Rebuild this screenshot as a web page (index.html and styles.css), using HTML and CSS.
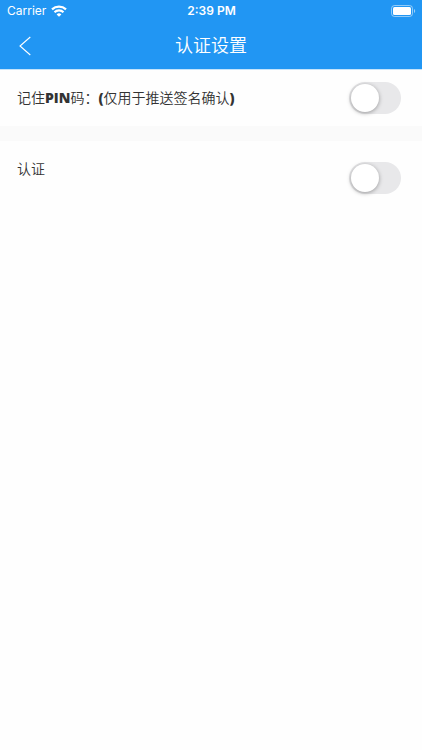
FILE: index.html
```html
<!DOCTYPE html>
<html lang="zh-CN">
<head>
<meta charset="utf-8">
<meta name="viewport" content="width=device-width, initial-scale=1">
<title>认证设置</title>
<link rel="stylesheet" href="styles.css">
</head>
<body>
<header class="header">
  <div class="status">
    <div class="status-left">
      <span>Carrier</span>
      <svg class="wifi" width="16" height="12" viewBox="0 0 16 12" fill="none" stroke="currentColor" stroke-width="2.200" aria-hidden="true">
        <path d="M1 4.4a10.2 10.2 0 0 1 14 0"/>
        <path d="M3.5 7.200a6.5 6.5 0 0 1 9 0"/>
        <path d="M8 11.8 5.6 9.4a3.5 3.5 0 0 1 4.8 0z" fill="currentColor" stroke="none"/>
      </svg>
    </div>
    <time class="clock">2:39 PM</time>
    <svg class="battery" width="25" height="12" viewBox="0 0 25 12" aria-hidden="true">
      <rect x=".5" y=".5" width="21" height="11" rx="3" fill="none" stroke="#fff" stroke-opacity=".5"/>
      <rect x="2" y="2" width="18" height="8" rx="1.5" fill="#fff"/>
      <path d="M23 4v4c1.6-.7 1.6-3.300 0-4z" fill="#fff" fill-opacity=".55"/>
    </svg>
  </div>
  <div class="nav">
    <button class="back" type="button" aria-label="返回">
      <svg width="12" height="20" viewBox="0 0 12 20" fill="none" stroke="currentColor" stroke-width="1.100" aria-hidden="true"><path d="M11.300 1 1 10l10.300 9"/></svg>
    </button>
    <h1 class="title">认证设置</h1>
  </div>
</header>
<main class="settings">
  <div class="row">
    <label class="label" for="pin">记住<b>PIN</b>码：<b>(</b>仅用于推送签名确认<b>)</b></label>
    <input class="switch" id="pin" type="checkbox" role="switch">
  </div>
  <div class="row row-tall">
    <label class="label" for="auth">认证</label>
    <input class="switch" id="auth" type="checkbox" role="switch">
  </div>
</main>
</body>
</html>
```
FILE: styles.css
```css
* {
  box-sizing: border-box;
}

body {
  margin: 0;
  background: #fefefe;
  color: #333;
  font-family: Inter, "Noto Sans CJK SC", sans-serif;
  font-size: 14px;
  line-height: 20px;
}

.header {
  background: #2196f3;
  border-bottom: 1px solid #c4e4fb;
  color: #fff;
}

.status,
.nav {
  display: grid;
  grid-template-columns: 1fr auto 1fr;
  align-items: center;
}

.status {
  height: 22px;
  padding: 0 6px 0 7px;
  font-size: 12px;
}

.status-left {
  display: flex;
  align-items: center;
  gap: 5px;
}

.clock {
  font-weight: 600;
}

.battery {
  justify-self: end;
}

.nav {
  height: 47px;
}

.back {
  display: flex;
  justify-self: start;
  margin: 0;
  padding: 12px 19px;
  border: 0;
  background: none;
  color: inherit;
}

.title {
  margin: 0;
  font-size: 18px;
  font-weight: 350;
}

.settings {
  display: grid;
  gap: 15px;
  background: #fafafa;
}

.row {
  display: flex;
  align-items: center;
  justify-content: space-between;
  padding: 12px 21px 12px 17px;
  background: #fefefe;
}

.row-tall {
  align-items: flex-start;
  padding-top: 21px;
}

.row-tall .label {
  align-self: stretch;
  margin-top: -3px;
}

.label {
  font-weight: 350;
}

.label b {
  font-family: "Open Sans", sans-serif;
  font-weight: 800;
}

.switch {
  appearance: none;
  display: flex;
  width: 52px;
  height: 32px;
  margin: 0;
  padding: 2px;
  border-radius: 16px;
  background: #e8e8ea;
}

.switch::before {
  content: "";
  width: 28px;
  height: 28px;
  border-radius: 50%;
  background: #fff;
  box-shadow: 0 1px 4px rgb(0 0 0 / 35%);
}

.switch:checked {
  justify-content: flex-end;
  background: #2196f3;
}
```
